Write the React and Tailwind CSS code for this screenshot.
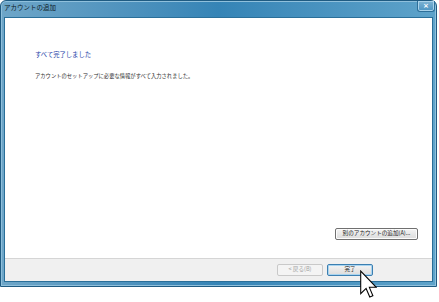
import React from 'react';

// Windows 7 style "add account" wizard, finished page

const jp = { fontFamily: '"Noto Sans CJK JP", "Noto Sans", sans-serif' };

function Cursor() {
  return (
    <svg
      className="absolute left-[360px] top-[270px]"
      width="17"
      height="29"
      viewBox="0 0 12 20"
    >
      <path
        d="M0.5 0.5 L0.5 16.5 L4.3 12.8 L6.9 18.8 L9.1 17.9 L6.6 12 L11.5 12 Z"
        fill="#ffffff"
        stroke="#000000"
        strokeWidth="0.75"
        strokeLinejoin="miter"
      />
    </svg>
  );
}

function WinButton({ children, disabled, isDefault, className = '' }) {
  return (
    <div
      className={
        'flex h-[12px] items-center justify-center rounded-[2px] border text-[5.6px] leading-none ' +
        (disabled
          ? 'border-[#c9c9c9] bg-[#f4f4f4] text-[#a3a3a3] '
          : isDefault
          ? 'border-[#3c7fb1] bg-gradient-to-b from-[#f4f4f4] to-[#dcdcdc] text-[#222] shadow-[inset_0_0_0_1px_#a8d4f0] '
          : 'border-[#707070] bg-gradient-to-b from-[#f4f4f4] to-[#dcdcdc] text-[#222] shadow-[inset_0_0_0_1px_#fcfcfc] ') +
        className
      }
    >
      {children}
    </div>
  );
}

function App() {
  return (
    <div className="relative h-[302px] w-[439px] overflow-hidden bg-white" style={jp}>
      {/* --- Window frame --- */}
      <div className="flex h-[287px] w-[437px] flex-col rounded-t-[6px] border border-[#1f5b82] bg-gradient-to-r from-[#6ea6c8] via-[#3584b6] to-[#5ea3ca] shadow-[inset_0_0_0_1px_#8fc0dc]">
        {/* title bar */}
        <div className="flex h-[16px] shrink-0 items-start justify-between pl-[3px] pr-[1px]">
          <span className="mt-[3px] text-[6.5px] leading-none text-[#0c1a24]">
            アカウントの追加
          </span>
          <div className="flex h-[11px] w-[18px] items-center justify-center rounded-b-[3px] border border-t-0 border-[#2d6f99] bg-gradient-to-b from-[#7fb4d4] to-[#4b94c2] shadow-[inset_0_0_0_1px_#a9d2ea]">
            <span className="text-[7px] font-bold leading-none text-white" style={{ fontFamily: '"DejaVu Sans", sans-serif' }}>
              ×
            </span>
          </div>
        </div>

        {/* client area */}
        <div className="mx-[3px] flex flex-1 flex-col border border-[#2a6f99] bg-white">
          <div className="flex flex-1 flex-col px-[30px] pt-[34px]">
            <p className="text-[6.3px] leading-none text-[#2442a8]">すべて完了しました</p>
            <p className="mt-[16px] text-[5.3px] leading-none text-[#2e2e2e]">
              アカウントのセットアップに必要な情報がすべて入力されました。
            </p>
            <div className="mt-auto mb-[18px] flex justify-end">
              <WinButton className="-mr-[16px] w-[83px]">別のアカウントの追加(A)...</WinButton>
            </div>
          </div>
          <div className="flex h-[23px] shrink-0 items-center justify-end gap-[4px] border-t border-[#d5d5d5] bg-[#f0f0f0] pr-[59px]">
            <WinButton disabled className="w-[46px]">&lt; 戻る(B)</WinButton>
            <WinButton isDefault className="w-[46px]">完了</WinButton>
          </div>
        </div>

        {/* bottom frame */}
        <div className="h-[4px] shrink-0" />
      </div>

      <Cursor />
    </div>
  );
}

export default App;
